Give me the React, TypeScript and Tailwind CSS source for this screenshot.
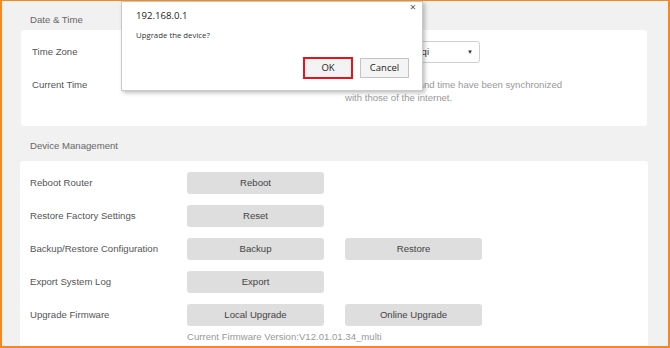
import React from 'react';

const rows = [
  { label: 'Reboot Router', buttons: ['Reboot'] },
  { label: 'Restore Factory Settings', buttons: ['Reset'] },
  { label: 'Backup/Restore Configuration', buttons: ['Backup', 'Restore'] },
  { label: 'Export System Log', buttons: ['Export'] },
  { label: 'Upgrade Firmware', buttons: ['Local Upgrade', 'Online Upgrade'] },
];

function ConfirmDialog() {
  return (
    <div className="absolute left-[119px] top-0 w-[302px] h-[90px] bg-white border border-[#c9c9c9] shadow-[2px_2px_4px_rgba(0,0,0,0.25)] font-['Open_Sans',sans-serif] text-[#222]">
      <span className="absolute right-[6px] top-[-2px] text-[11px] leading-[14px] text-[#555]">×</span>
      <div className="pl-[14px] pt-[6px] text-[9.6px] leading-[15px]">192.168.0.1</div>
      <div className="pl-[14px] pt-[6px] text-[7.8px] leading-[12px] text-[#333]">Upgrade the device?</div>
      <div className="flex justify-end gap-[7px] pr-[13px] pt-[16px]">
        <button className="w-[50px] h-[22px] border-2 border-[#e5141f] bg-[#f3f3f3] text-[9.5px] text-[#222]">
          OK
        </button>
        <button className="w-[49px] h-[20px] mt-[1px] border border-[#c4c4c4] bg-[#f4f4f4] text-[9.5px] text-[#222]">
          Cancel
        </button>
      </div>
    </div>
  );
}

export default function App() {
  return (
    <div className="relative w-[670px] h-[348px] overflow-hidden bg-[#f1f1f1] border-t border-x-2 border-b-2 border-[#f7881f] font-['Liberation_Sans',Arial,sans-serif] text-[9.6px]">
      <div className="pl-[19px] pr-[21px]">
        {/* Date & Time */}
        <div className="pt-[9px] pl-[9px] leading-[20px] text-[#666]">Date &amp; Time</div>
        <div className="h-[96px] bg-white rounded-[3px] pt-[11px] pl-[11px]">
          <div className="flex items-center h-[22px]">
            <div className="w-[156px] text-[#555]">Time Zone</div>
            <div className="flex items-center w-[292px] h-[22px] border border-[#cfcfcf] rounded-[3px] bg-white text-[#333]">
              <span className="flex-1 text-right pr-[38px] truncate">(GMT+08:00) Beijing, Chongqing, Hong Kong, Urumqi</span>
              <span className="pr-[6px] text-[6px]">▼</span>
            </div>
          </div>
          <div className="flex mt-[15px]">
            <div className="w-[156px] leading-[13px] text-[#555]">Current Time</div>
            <div className="w-[157px]" />
            <div className="leading-[13px] text-[#999]">
              <div>The system date and time have been synchronized</div>
              <div>with those of the internet.</div>
            </div>
          </div>
        </div>

        {/* Device Management */}
        <div className="pt-[10px] pb-[5px] pl-[9px] leading-[20px] text-[#666]">Device Management</div>
        <div className="h-[200px] bg-white rounded-[3px] pt-[11px] pl-[10px] -mx-[1px]">
          <div className="flex flex-col gap-[11px]">
            {rows.map((row) => (
              <div key={row.label} className="flex items-center h-[22px]">
                <div className="w-[157px] text-[#555]">{row.label}</div>
                <div className="flex gap-[21px]">
                  {row.buttons.map((b) => (
                    <button
                      key={b}
                      className="w-[137px] h-[22px] rounded-[3px] bg-[#dedede] text-[9.6px] text-[#444]"
                    >
                      {b}
                    </button>
                  ))}
                </div>
              </div>
            ))}
          </div>
          <div className="pl-[157px] mt-[5px] leading-[12px] text-[#999]">
            Current Firmware Version:V12.01.01.34_multi
          </div>
        </div>
      </div>

      <ConfirmDialog />
    </div>
  );
}
